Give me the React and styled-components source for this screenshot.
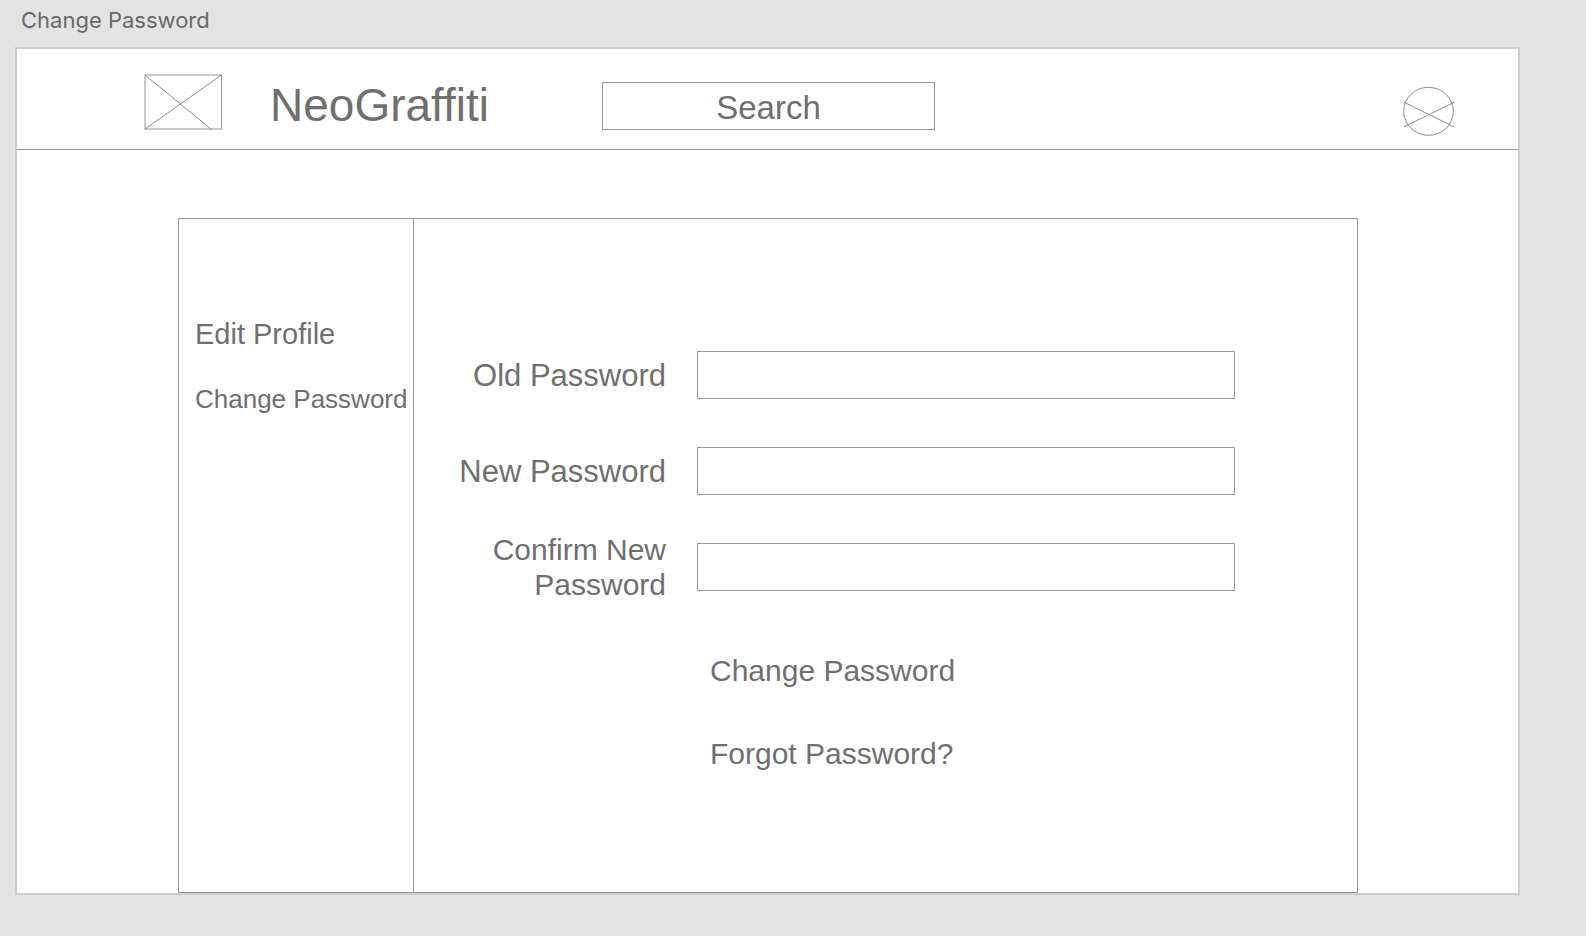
import React from "react";
import styled, { createGlobalStyle } from "styled-components";

const ink = "#6f6f6f";
const line = "#989898";

const GlobalStyle = createGlobalStyle`
  *, *::before, *::after { box-sizing: border-box; }
  body {
    margin: 0;
    background: #e4e4e4;
    color: ${ink};
    font-family: "Liberation Sans", Arial, sans-serif;
    font-variant-ligatures: none;
  }
`;

const Page = styled.div`
  display: flex;
  flex-direction: column;
  min-height: 100vh;
  padding: 0 66px 41px 15px;
`;

const ArtboardTitle = styled.h1`
  margin: 0;
  padding: 5px 0 12px 6px;
  font-family: Inter, sans-serif;
  font-size: 22px;
  font-weight: 400;
  line-height: 30px;
  color: #696969;
`;

const Artboard = styled.div`
  flex: 1;
  display: flex;
  flex-direction: column;
  border: 2px solid #cdcdcd;
  background: #fff;
`;

const Header = styled.header`
  display: flex;
  justify-content: space-between;
  align-items: flex-end;
  padding: 25px 63px 13px 127px;
  border-bottom: 1px solid ${line};
`;

const HeaderStart = styled.div`
  display: flex;
  align-items: flex-end;
  padding-bottom: 6px;
`;

const Drawing = styled.svg`
  display: block;
  flex: none;
  fill: none;
  stroke: #8c8c8c;
  stroke-width: 1;
`;

const Brand = styled.div`
  margin: 0 113px 0 48px;
  font-size: 46px;
  line-height: 50px;
`;

const SearchInput = styled.input`
  appearance: none;
  width: 333px;
  height: 48px;
  padding: 4px 8px 0;
  border: 1px solid ${line};
  border-radius: 0;
  background: #fff;
  color: ${ink};
  font: inherit;
  font-size: 33px;
  text-align: center;
  &::placeholder { color: ${ink}; opacity: 1; }
  &::-webkit-search-cancel-button { display: none; }
`;

const ProfileButton = styled.button`
  padding: 0;
  border: 0;
  background: none;
  cursor: pointer;
`;

const Panel = styled.main`
  flex: 1;
  display: flex;
  margin: 68px 160px 0 161px;
  border: 1px solid ${line};
`;

const SideNav = styled.nav`
  display: flex;
  flex-direction: column;
  gap: 30px;
  flex: none;
  width: 235px;
  padding: 98px 0 0 16px;
  border-right: 1px solid ${line};
`;

const TextLink = styled.a`
  color: ${ink};
  font-size: ${(p) => p.$size}px;
  line-height: 35px;
  text-decoration: none;
  white-space: nowrap;
`;

const Form = styled.form`
  flex: 1;
  display: flex;
  flex-direction: column;
  gap: 26px;
  padding: 121px 122px 40px 40px;
`;

const Field = styled.div`
  display: flex;
  align-items: center;
  gap: 31px;
  min-height: 70px;
`;

const Label = styled.label`
  flex: none;
  width: 212px;
  font-size: ${(p) => p.$size}px;
  line-height: 35px;
  text-align: right;
`;

const PasswordInput = styled.input`
  flex: 1;
  min-width: 0;
  height: 48px;
  padding: 0 12px;
  border: 1px solid ${line};
  border-radius: 0;
  background: #fff;
  color: ${ink};
  font: inherit;
  font-size: 30px;
`;

const Actions = styled.div`
  display: flex;
  flex-direction: column;
  align-items: flex-start;
  gap: 48px;
  padding: 25px 0 0 256px;
`;

const SubmitButton = styled.button`
  padding: 0;
  border: 0;
  background: none;
  color: ${ink};
  font: inherit;
  font-size: 30px;
  line-height: 35px;
  cursor: pointer;
`;

const fields = [
  { id: "old-password", label: "Old Password", size: 31 },
  { id: "new-password", label: "New Password", size: 31 },
  { id: "confirm-password", label: "Confirm New Password", size: 30 },
];

function LogoPlaceholder() {
  return (
    <Drawing width="78" height="56" viewBox="0 0 78 56" aria-hidden="true">
      <rect x="1" y="1" width="76.5" height="54" stroke="#969696" />
      <path d="M1 1L67.5 55.5M77.5 1L1 55" />
    </Drawing>
  );
}

function AvatarPlaceholder() {
  return (
    <Drawing width="52" height="50" viewBox="0 0 52 50" aria-hidden="true">
      <ellipse cx="25.5" cy="25.3" rx="24.8" ry="24" />
      <path d="M1 16.3L51 40.8M51 16.3L1 40.8" />
    </Drawing>
  );
}

export default function App() {
  return (
    <>
      <GlobalStyle />
      <Page>
        <ArtboardTitle>Change Password</ArtboardTitle>
        <Artboard>
          <Header>
            <HeaderStart>
              <LogoPlaceholder />
              <Brand>NeoGraffiti</Brand>
              <SearchInput type="search" placeholder="Search" aria-label="Search" />
            </HeaderStart>
            <ProfileButton type="button" aria-label="Profile">
              <AvatarPlaceholder />
            </ProfileButton>
          </Header>
          <Panel>
            <SideNav>
              <TextLink href="#edit-profile" $size={29}>Edit Profile</TextLink>
              <TextLink href="#change-password" $size={26}>Change Password</TextLink>
            </SideNav>
            <Form onSubmit={(e) => e.preventDefault()}>
              {fields.map((f) => (
                <Field key={f.id}>
                  <Label htmlFor={f.id} $size={f.size}>{f.label}</Label>
                  <PasswordInput id={f.id} type="password" />
                </Field>
              ))}
              <Actions>
                <SubmitButton type="submit">Change Password</SubmitButton>
                <TextLink href="#forgot-password" $size={30}>Forgot Password?</TextLink>
              </Actions>
            </Form>
          </Panel>
        </Artboard>
      </Page>
    </>
  );
}
